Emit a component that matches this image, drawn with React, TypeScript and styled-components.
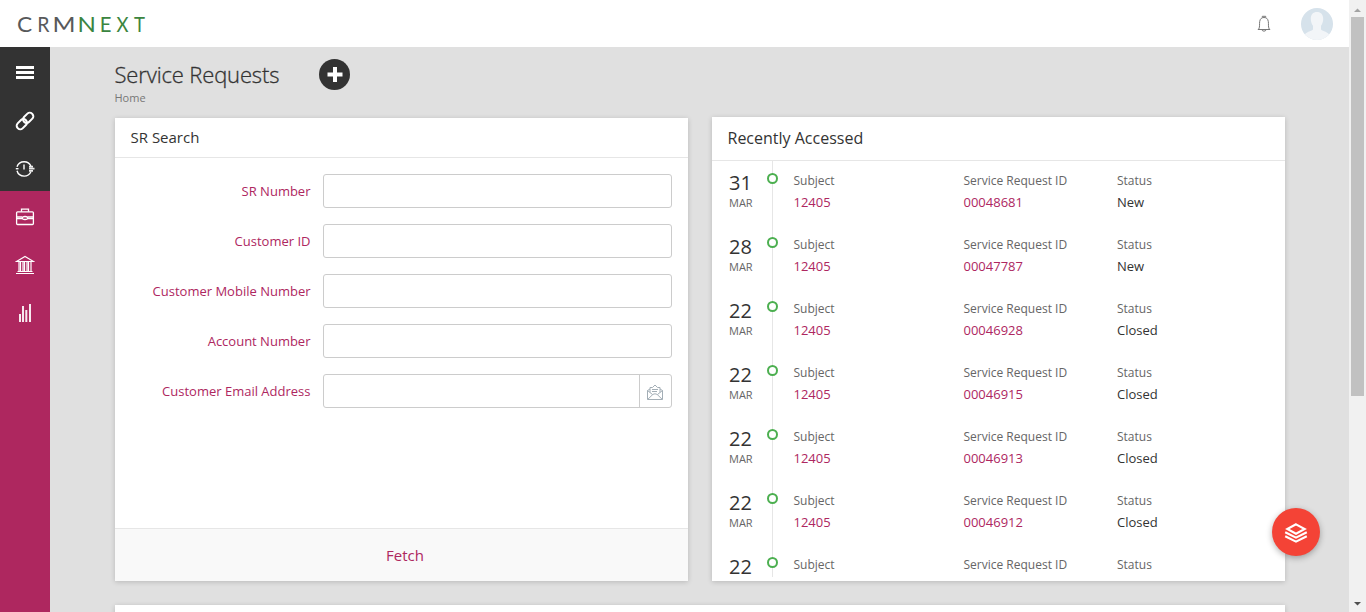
import React from "react";
import styled, { createGlobalStyle } from "styled-components";

const GlobalStyle = createGlobalStyle`
  * { box-sizing: border-box; }
  html, body { margin: 0; height: 100%; overflow: hidden; }
  body {
    font-family: "Open Sans", "Noto Sans", sans-serif;
    font-size: 13px;
    color: #333;
    background: #e0e0e0;
  }
`;

const accent = "#ae275f";

const Shell = styled.div`
  display: flex;
  width: 1366px;
  height: 612px;
  overflow: hidden;
`;

const Viewport = styled.div`
  flex: 1;
  display: flex;
  flex-direction: column;
  min-width: 0;
`;

const TopBar = styled.header`
  flex: none;
  height: 47px;
  display: flex;
  align-items: center;
  justify-content: space-between;
  padding: 0 16px 0 0;
  background: #fff;
`;

const TopActions = styled.div`
  display: flex;
  align-items: center;
  gap: 30px;
`;

const Body = styled.div`
  flex: 1;
  display: flex;
  min-height: 0;
`;

const SideBar = styled.nav`
  flex: none;
  width: 50px;
  background: ${accent};
`;

const SideItem = styled.a<{ $dark?: boolean }>`
  display: flex;
  align-items: center;
  justify-content: center;
  height: 48px;
  padding-top: 4px;
  background: ${(p) => (p.$dark ? "#333" : accent)};
`;

const Main = styled.main`
  flex: 1;
  min-width: 0;
  overflow: hidden;
  padding: 12px 64px 0 65px;
`;

const PageHead = styled.div`
  display: flex;
  height: 58px;
`;

const TitleBlock = styled.div`
  width: 204px;
`;

const Title = styled.h1`
  margin: 0 0 0 -0.5px;
  font-size: 22px;
  font-weight: 300;
  -webkit-text-stroke: 0.3px #333;
  letter-spacing: -0.15px;
  line-height: 31px;
  white-space: nowrap;
  color: #333;
`;

const Crumb = styled.div`
  margin-left: -0.5px;
  font-size: 11px;
  line-height: 15px;
  color: #777;
`;

const AddButton = styled.button`
  display: flex;
  align-items: center;
  justify-content: center;
  width: 31px;
  height: 31px;
  padding: 0;
  border: 0;
  border-radius: 50%;
  background: #333;
`;

const Panels = styled.div`
  display: flex;
  align-items: flex-end;
  gap: 24px;
  height: 464px;
`;

const Panel = styled.section<{ $h: number }>`
  flex: 1;
  display: flex;
  flex-direction: column;
  height: ${(p) => p.$h}px;
  background: #fff;
  box-shadow: 0 1px 5px rgba(0, 0, 0, 0.18);
`;

const PanelHead = styled.h2<{ $h: number; $size: number }>`
  flex: none;
  height: ${(p) => p.$h}px;
  margin: 0;
  padding-left: 15.5px;
  border-bottom: 1px solid #e6e6e6;
  font-size: ${(p) => p.$size}px;
  font-weight: 400;
  line-height: ${(p) => p.$h - 1}px;
`;

const Form = styled.div`
  flex: 1;
  display: flex;
  flex-direction: column;
  gap: 16px;
  padding: 16px 16px 0 0;
`;

const Field = styled.label`
  display: flex;
  height: 34px;
`;

const FieldLabel = styled.span`
  width: 208px;
  padding-right: 12.5px;
  text-align: right;
  line-height: 34px;
  color: ${accent};
`;

const InputBox = styled.span`
  flex: 1;
  display: flex;
  border: 1px solid #ccc;
  border-radius: 3px;
`;

const Input = styled.input`
  flex: 1;
  min-width: 0;
  padding: 0 8px;
  border: 0;
  outline: 0;
  background: transparent;
  font: inherit;
`;

const InputAddon = styled.span`
  display: flex;
  align-items: center;
  justify-content: center;
  width: 32px;
  padding: 2px 1px 0 0;
  border-left: 1px solid #ccc;
`;

const Footer = styled.button`
  flex: none;
  height: 53px;
  padding: 0 0 0 7px;
  border: 0;
  border-top: 1px solid #e6e6e6;
  background: #f9f9f9;
  font: inherit;
  font-size: 15px;
  color: ${accent};
`;

const Timeline = styled.div`
  flex: 1;
  min-height: 0;
  overflow: hidden;
`;

const Entry = styled.div<{ $last?: boolean }>`
  display: grid;
  grid-template-columns: 55px 12px 14.5px 170px 153.5px 1fr;
  height: ${(p) => (p.$last ? 36 : 64)}px;
`;

const DateCell = styled.div`
  padding: 9px 0 0 17px;
`;

const Day = styled.div`
  font-size: 20px;
  line-height: 26px;
`;

const Month = styled.div`
  font-size: 11px;
  line-height: 14px;
  color: #666;
`;

const Rail = styled.div<{ $last?: boolean }>`
  display: flex;
  justify-content: center;
  width: 11px;
  margin-bottom: ${(p) => (p.$last ? 4 : 0)}px;
  padding-top: 12px;
  background: linear-gradient(#e6e6e6, #e6e6e6) 5px 0 / 1px 100% no-repeat;
`;

const Dot = styled.span`
  width: 11px;
  height: 11px;
  border: 2px solid #4caf50;
  border-radius: 50%;
  background: #fff;
`;

const Info = styled.div`
  padding-top: 9px;
`;

const Caption = styled.div`
  font-size: 12px;
  line-height: 22px;
  color: #666;
`;

const Value = styled.div<{ $link?: boolean }>`
  line-height: 20px;
  color: ${(p) => (p.$link ? accent : "#333")};
`;

const NextPanel = styled.section`
  height: 100px;
  margin-top: 24px;
  background: #fff;
  box-shadow: 0 1px 5px rgba(0, 0, 0, 0.18);
`;

const Fab = styled.button`
  position: absolute;
  left: 1272px;
  top: 508px;
  display: flex;
  align-items: center;
  justify-content: center;
  width: 48px;
  height: 48px;
  padding: 2px 0 0;
  border: 0;
  border-radius: 50%;
  background: #f44336;
  box-shadow: 0 2px 6px rgba(0, 0, 0, 0.3);
`;

const ScrollTrack = styled.div`
  flex: none;
  display: flex;
  flex-direction: column;
  align-items: center;
  justify-content: space-between;
  width: 17px;
  background: #f1f1f1;
`;

const ScrollArrow = styled.div<{ $down?: boolean }>`
  height: 17px;
  padding-top: ${(p) => (p.$down ? 6 : 7)}px;
  line-height: 0;
`;

const ScrollThumb = styled.div`
  width: 13px;
  height: 379px;
  margin-bottom: auto;
  background: #c1c1c1;
`;

const logoLetters = [
  { char: "C", x: 17, width: 15.2 },
  { char: "R", x: 37.2, width: 12.2 },
  { char: "M", x: 52.4, width: 23 },
  { char: "N", x: 77.5, width: 18.4 },
  { char: "E", x: 99.8, width: 11.7 },
  { char: "X", x: 116.4, width: 12 },
  { char: "T", x: 134, width: 11 },
];

const Logo = () => (
  <svg width="160" height="47" fontFamily="Lato, sans-serif" fontSize="21.6">
    {logoLetters.map((l, i) => (
      <text key={l.char} x={l.x} y="32.3" textLength={l.width} lengthAdjust="spacingAndGlyphs" fill={i < 3 ? "#58595b" : "#3b8540"}>
        {l.char}
      </text>
    ))}
  </svg>
);

const BellIcon = () => (
  <svg width="14" height="17" viewBox="0 0 14 17" fill="none" stroke="#777" strokeWidth="1">
    <path d="M.8 14.5h12.400M1.800 14C3 11.500 2.300 9 2.700 6.500C3.100 3.500 5 2.500 7 2.500s3.900 1 4.300 4C11.700 9 11 11.500 12.200 14M5.300 2.500V1.300h3.400V2.500M5 15c.3 1.500 3.700 1.500 4 0" />
  </svg>
);

const Avatar = () => (
  <svg width="32" height="32" viewBox="0 0 32 32">
    <defs>
      <clipPath id="avatar"><circle cx="16" cy="16" r="16" /></clipPath>
    </defs>
    <g clipPath="url(#avatar)">
      <rect width="32" height="32" fill="#d6e2eb" />
      <path d="M16 4c4 0 6.300 2.700 6.200 7c0 3-1 5-2.200 6.800v3.700c2 2 7 2.300 9 6V33H3v-5.500c2-3.700 7-4 9-6v-3.700C10.700 16 9.800 14 9.800 11C9.700 6.700 12 4 16 4z" fill="#f2f5f8" />
    </g>
  </svg>
);

const MenuIcon = () => (
  <svg width="20" height="14" viewBox="0 0 20 14" fill="#fff">
    <path d="M1 0h18v3H1zM1 5h18v3H1zM1 10h18v3H1z" />
  </svg>
);

const LinkIcon = () => (
  <svg width="20" height="20" viewBox="0 0 20 20" fill="none" stroke="#fff" strokeWidth="2">
    <g transform="rotate(-45 10 10)">
      <rect x="-0.200" y="6.500" width="11.400" height="7" rx="3.300" />
      <rect x="8.800" y="6.500" width="11.400" height="7" rx="3.300" />
    </g>
  </svg>
);

const HistoryIcon = () => (
  <svg width="20" height="18" viewBox="0 0 20 18" fill="none" stroke="#fff" strokeWidth="1.400">
    <path d="M2 6.800C3 3.500 6 1.700 9.200 1.700c3 0 5.500 1.600 6.700 4.300M2 10.800C3 14.300 6 16.100 9.200 16.100c3 0 5.500-1.600 6.700-4.300M9 4.500V9.500" />
    <path d="M.8 8.700h2.700" />
    <path d="M14 6.600h4M14 8.700h5.500M14 10.800h4" strokeWidth="1.800" strokeOpacity="0.900" />
  </svg>
);

const BriefcaseIcon = () => (
  <svg width="20" height="18" viewBox="0 0 20 18" fill="none" stroke="#fff" strokeWidth="1.300">
    <rect x="1.600" y="3.800" width="16.800" height="12.700" rx="1" />
    <path d="M6.500 3.800V1.200h7V3.800M1.600 9h5.600M12.800 9h5.600M1.600 10.600h5.600M12.800 10.600h5.600" />
    <ellipse cx="10" cy="10" rx="2.700" ry="1.500" />
  </svg>
);

const BankIcon = () => (
  <svg width="20" height="20" viewBox="0 0 20 20" fill="none" stroke="#fff" strokeWidth="1.200">
    <path d="M1.500 6.500L10 1.500l8.500 5zM2.500 16.500h15M1 18.500h18M4 7v9.500M5.500 7v9.500M8 7v9.500M9.500 7v9.500M12 7v9.500M13.500 7v9.500M16 7v9.500" />
  </svg>
);

const ChartIcon = () => (
  <svg width="14" height="20" viewBox="0 0 14 20" fill="#fff" fillOpacity="0.900">
    <path d="M1 11h2v8H1zM4 3h2v16H4zM7.300 7h2v12h-2zM11 1h2v18h-2z" />
  </svg>
);

const MailIcon = () => (
  <svg width="16" height="16" viewBox="0 0 16 16" fill="none" stroke="#a3aeb6" strokeWidth="1">
    <path d="M3 5L.5 6.500V15.500h15V6.500L13 5M.5 6.500L5.500 10.500M15.500 6.500L10.500 10.500M.8 15.300L6 10.300q2-1 4 0l5.200 5M3 8.500V3.500h2.500L8 1l2.500 2.500H13v5M5 5.500h6M5 7.500h5" />
  </svg>
);

const LayersIcon = () => (
  <svg width="24" height="20" viewBox="0 0 24 20" fill="none" stroke="#fff" strokeWidth="2.100">
    <path d="M12 1.300L20.700 6L12 10.700L3.300 6z" />
    <path d="M1.200 9.200L12 14.600l10.800-5.400M1.200 13.300L12 18.700l10.800-5.400" />
  </svg>
);

const fields = ["SR Number", "Customer ID", "Customer Mobile Number", "Account Number", "Customer Email Address"];

const entries = [
  { day: "31", id: "00048681", status: "New" },
  { day: "28", id: "00047787", status: "New" },
  { day: "22", id: "00046928", status: "Closed" },
  { day: "22", id: "00046915", status: "Closed" },
  { day: "22", id: "00046913", status: "Closed" },
  { day: "22", id: "00046912", status: "Closed" },
  { day: "22", id: "", status: "" },
];

const sideItems = [
  { icon: <MenuIcon />, dark: true },
  { icon: <LinkIcon />, dark: true },
  { icon: <HistoryIcon />, dark: true },
  { icon: <BriefcaseIcon />, dark: false },
  { icon: <BankIcon />, dark: false },
  { icon: <ChartIcon />, dark: false },
];

export default function App() {
  return (
    <>
      <GlobalStyle />
      <Shell>
        <Viewport>
          <TopBar>
            <Logo />
            <TopActions>
              <BellIcon />
              <Avatar />
            </TopActions>
          </TopBar>
          <Body>
            <SideBar>
              {sideItems.map((item, i) => (
                <SideItem key={i} $dark={item.dark}>{item.icon}</SideItem>
              ))}
            </SideBar>
            <Main>
              <PageHead>
                <TitleBlock>
                  <Title>Service Requests</Title>
                  <Crumb>Home</Crumb>
                </TitleBlock>
                <AddButton>
                  <svg width="17" height="17" viewBox="0 0 17 17" fill="#fff">
                    <path d="M7 1h4v5.500h5.500v4H11V16H7v-5.500H1.500v-4H7z" />
                  </svg>
                </AddButton>
              </PageHead>
              <Panels>
                <Panel $h={463}>
                  <PanelHead $h={40} $size={15}>SR Search</PanelHead>
                  <Form>
                    {fields.map((name) => (
                      <Field key={name}>
                        <FieldLabel>{name}</FieldLabel>
                        <InputBox>
                          <Input />
                          {name === "Customer Email Address" && <InputAddon><MailIcon /></InputAddon>}
                        </InputBox>
                      </Field>
                    ))}
                  </Form>
                  <Footer>Fetch</Footer>
                </Panel>
                <Panel $h={464}>
                  <PanelHead $h={44} $size={16}>Recently Accessed</PanelHead>
                  <Timeline>
                    {entries.map((e, i) => (
                      <Entry key={i} $last={!e.id}>
                        <DateCell>
                          <Day>{e.day}</Day>
                          {e.id && <Month>MAR</Month>}
                        </DateCell>
                        <Rail $last={!e.id}><Dot /></Rail>
                        <span />
                        <Info>
                          <Caption>Subject</Caption>
                          {e.id && <Value $link>12405</Value>}
                        </Info>
                        <Info>
                          <Caption>Service Request ID</Caption>
                          <Value $link>{e.id}</Value>
                        </Info>
                        <Info>
                          <Caption>Status</Caption>
                          <Value>{e.status}</Value>
                        </Info>
                      </Entry>
                    ))}
                  </Timeline>
                </Panel>
              </Panels>
              <NextPanel />
            </Main>
          </Body>
        </Viewport>
        <ScrollTrack>
          <ScrollArrow>
            <svg width="7" height="4"><path d="M0 4L3.500 0.500L7 4z" fill="#a3a3a3" /></svg>
          </ScrollArrow>
          <ScrollThumb />
          <ScrollArrow $down>
            <svg width="7" height="4"><path d="M0 0L3.500 3.500L7 0z" fill="#505050" /></svg>
          </ScrollArrow>
        </ScrollTrack>
      </Shell>
      <Fab><LayersIcon /></Fab>
    </>
  );
}
